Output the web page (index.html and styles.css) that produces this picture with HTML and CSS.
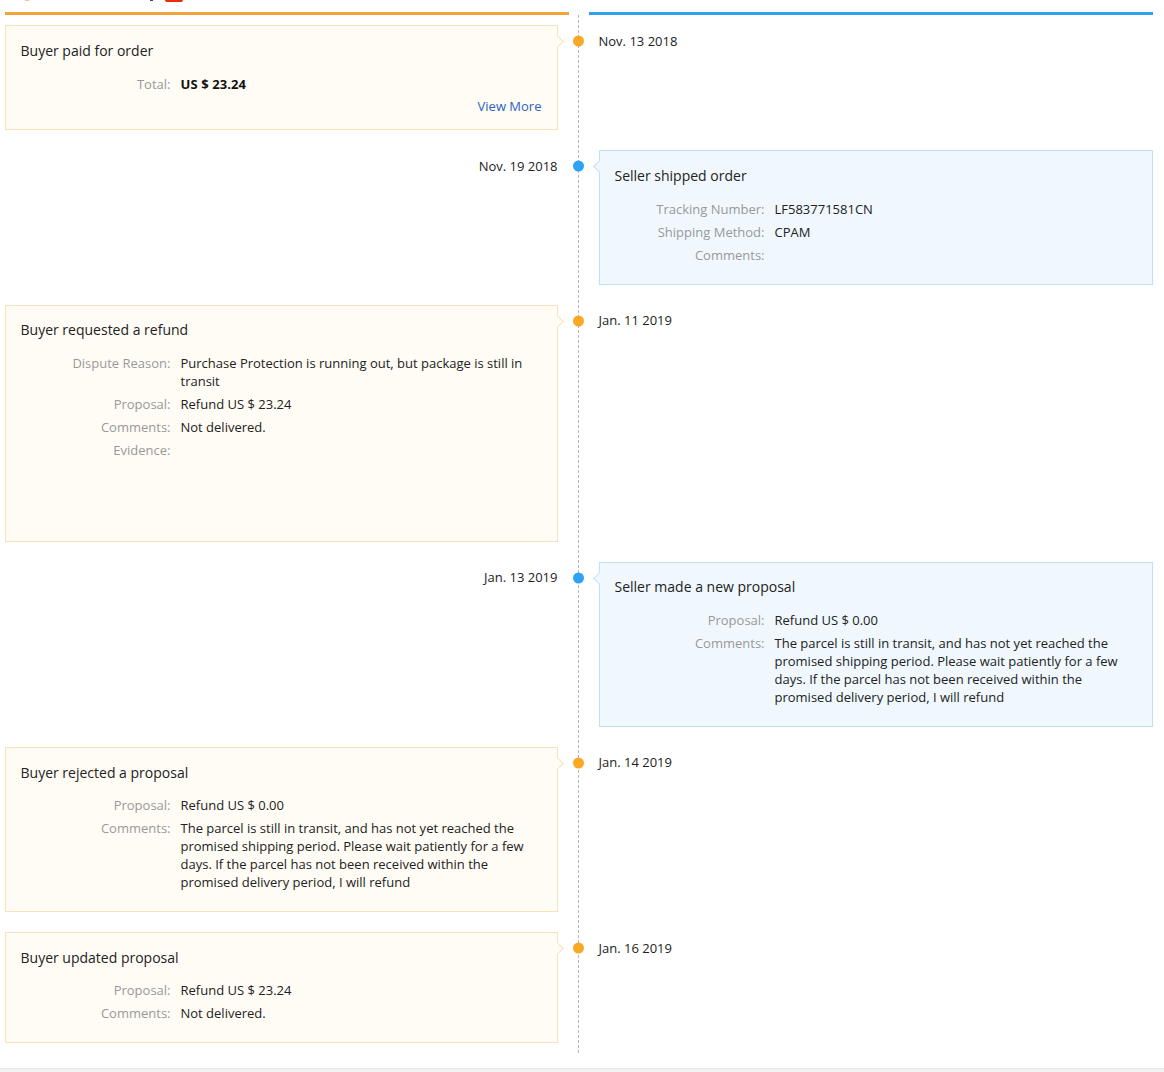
FILE: index.html
```html
<!DOCTYPE html>
<html lang="en">
<head>
<meta charset="utf-8">
<title>Order timeline</title>
<link rel="stylesheet" href="styles.css">
</head>
<body>
<div class="clip-strip">
  <span class="frag frag-orange"></span>
  <span class="frag frag-blue"></span>
  <span class="frag frag-red"></span>
</div>
<div class="heads">
  <div class="head head-buyer"></div>
  <div class="head head-seller"></div>
</div>
<div class="timeline">
  <div class="row row-buyer">
    <div class="card card-buyer h105">
      <h4>Buyer paid for order</h4>
      <dl><dt>Total:</dt><dd class="bold">US $ 23.24</dd></dl>
      <a class="more" href="#">View More</a>
    </div>
    <span class="dot"></span>
    <div class="date">Nov. 13 2018</div>
  </div>
  <div class="row row-seller">
    <div class="date">Nov. 19 2018</div>
    <span class="dot"></span>
    <div class="card card-seller h135">
      <h4>Seller shipped order</h4>
      <dl><dt>Tracking Number:</dt><dd>LF583771581CN</dd></dl>
      <dl><dt>Shipping Method:</dt><dd>CPAM</dd></dl>
      <dl><dt>Comments:</dt><dd></dd></dl>
    </div>
  </div>
  <div class="row row-buyer">
    <div class="card card-buyer h237">
      <h4 class="tight">Buyer requested a refund</h4>
      <dl><dt>Dispute Reason:</dt><dd>Purchase Protection is running out, but package is still in transit</dd></dl>
      <dl><dt>Proposal:</dt><dd>Refund US $ 23.24</dd></dl>
      <dl><dt>Comments:</dt><dd>Not delivered.</dd></dl>
      <dl><dt>Evidence:</dt><dd></dd></dl>
    </div>
    <span class="dot"></span>
    <div class="date date-up">Jan. 11 2019</div>
  </div>
  <div class="row row-seller">
    <div class="date date-up">Jan. 13 2019</div>
    <span class="dot"></span>
    <div class="card card-seller h165">
      <h4 class="tight">Seller made a new proposal</h4>
      <dl><dt>Proposal:</dt><dd>Refund US $ 0.00</dd></dl>
      <dl><dt>Comments:</dt><dd>The parcel is still in transit, and has not yet reached the promised shipping period. Please wait patiently for a few days. If the parcel has not been received within the promised delivery period, I will refund</dd></dl>
    </div>
  </div>
  <div class="row row-buyer">
    <div class="card card-buyer h165">
      <h4 class="tight2">Buyer rejected a proposal</h4>
      <dl><dt>Proposal:</dt><dd>Refund US $ 0.00</dd></dl>
      <dl><dt>Comments:</dt><dd>The parcel is still in transit, and has not yet reached the promised shipping period. Please wait patiently for a few days. If the parcel has not been received within the promised delivery period, I will refund</dd></dl>
    </div>
    <span class="dot"></span>
    <div class="date date-up">Jan. 14 2019</div>
  </div>
  <div class="row row-buyer">
    <div class="card card-buyer h111">
      <h4 class="tight2">Buyer updated proposal</h4>
      <dl><dt>Proposal:</dt><dd>Refund US $ 23.24</dd></dl>
      <dl><dt>Comments:</dt><dd>Not delivered.</dd></dl>
    </div>
    <span class="dot"></span>
    <div class="date">Jan. 16 2019</div>
  </div>
</div>
<div class="footer-edge"></div>
</body>
</html>
```

FILE: styles.css
```css
* { box-sizing: border-box; }
html, body { margin: 0; padding: 0; }
body {
  width: 1164px;
  height: 1072px;
  overflow: hidden;
  background: #fff;
  color: #222;
  font-family: "Open Sans", "Liberation Sans", sans-serif;
  font-size: 13px;
  line-height: 18px;
}
.clip-strip { position: relative; height: 12px; }
.frag { position: absolute; top: 0; display: block; }
.frag-orange { left: 25px; width: 4px; height: 1px; background: #f3c78a; }
.frag-blue { left: 150px; width: 3px; height: 1px; background: #2a4a9a; }
.frag-red { left: 165px; width: 18px; height: 2px; background: #e62e04; border-radius: 0 0 5px 5px; }
.heads { display: flex; gap: 20px; padding-left: 5px; height: 3px; }
.head { height: 3px; }
.head-buyer { width: 564px; background: #f2a33a; }
.head-seller { width: 564px; background: #2ea2ee; }
.timeline {
  position: relative;
  width: 1153px;
  margin-top: 10px;
  padding-left: 5px;
  display: flex;
  flex-direction: column;
  gap: 20px;
}
.timeline::before {
  content: "";
  position: absolute;
  left: 578px;
  top: -10px;
  height: 1038px;
  border-left: 1px dashed #b3b3b3;
}
.row {
  position: relative;
  display: grid;
  grid-template-columns: 553px 41px 554px;
}
.card {
  position: relative;
  padding: 15px 15px 0 14.5px;
  border: 1px solid;
}
.card::before {
  content: "";
  position: absolute;
  top: 11px;
  width: 8px;
  height: 8px;
  border: 1px solid;
  transform: rotate(45deg);
  border-color: inherit;
  background: inherit;
}
.card-buyer { background: #fffcf5; border-color: #f9e2b9; }
.card-buyer::before { right: -5px; border-left: 0; border-bottom: 0; }
.card-seller { background: #f0f8fe; border-color: #bfe0f5; }
.card-seller::before { left: -5px; border-right: 0; border-top: 0; }
.h105 { height: 105px; }
.h135 { height: 135px; }
.h237 { height: 237px; }
.h165 { height: 165px; }
.h111 { height: 111px; }
h4 {
  margin: 0 0 14px;
  font-size: 14px;
  font-weight: 400;
  line-height: 20px;
  color: #222;
}
h4.tight { margin-top: -1px; margin-bottom: 14px; }
h4.tight2 { margin-top: 0; margin-bottom: 13px; }
dl {
  display: flex;
  margin: 0 0 5px;
}
dt { width: 150px; flex: none; text-align: right; color: #999; }
dd { margin: 0 0 0 10px; flex: 1; padding-right: 15px; color: #222; }
.bold { font-weight: 700; color: #111; letter-spacing: 0.1px; }
.more {
  position: absolute;
  right: 15.5px;
  top: 71px;
  color: #2b62c4;
  text-decoration: none;
}
.dot {
  justify-self: center;
  margin-top: 10px;
  transform: translateY(0.5px);
  width: 11px;
  height: 11px;
  border-radius: 50%;
  position: relative;
  z-index: 1;
}
.row-buyer .dot { background: #f9a825; }
.row-seller .dot { background: #2ea2f5; }
.date { padding-top: 7px; }
.date-up { padding-top: 6px; }
.row-seller .date { text-align: right; padding-right: 0.5px; }
.row-buyer .date { margin-left: -0.5px; }
.footer-edge {
  position: absolute;
  left: 0;
  right: 0;
  top: 1068px;
  height: 4px;
  background: #f2f2f2;
  border-top: 1px solid #e6e6e6;
}
```
